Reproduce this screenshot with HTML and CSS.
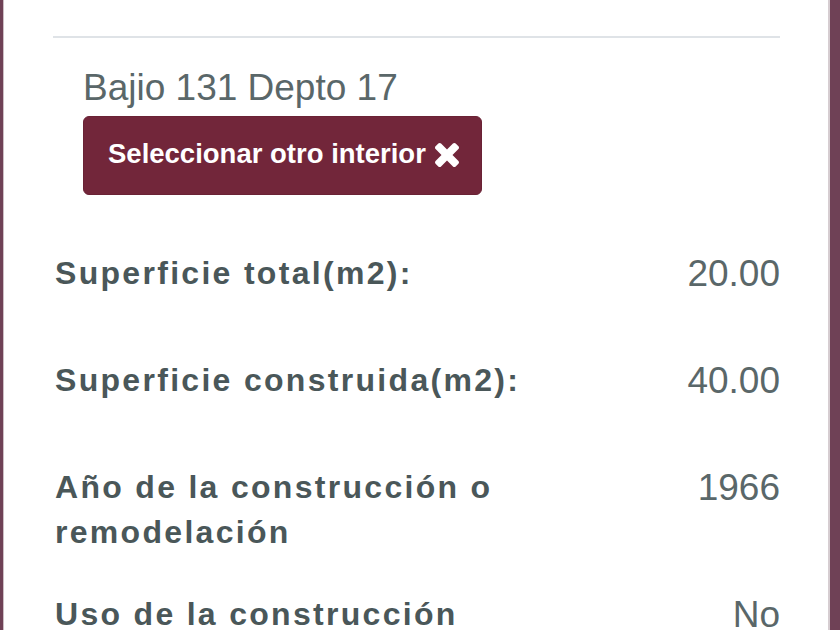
FILE: index.html
```html
<!DOCTYPE html>
<html lang="es">
<head>
<meta charset="utf-8">
<title>Interior</title>
<link rel="stylesheet" href="styles.css">
</head>
<body>
<div class="panel">
  <hr class="divider">
  <div class="address">
    <div class="address-name">Bajio 131 Depto 17</div>
    <button class="btn-change" type="button">
      <span>Seleccionar otro interior</span>
      <svg class="icon-x" viewBox="110 366 1188 1188" aria-hidden="true"><path fill="#fff" d="M1298 1322q0 40-28 68l-136 136q-28 28-68 28t-68-28l-294-294-294 294q-28 28-68 28t-68-28l-136-136q-28-28-28-68t28-68l294-294-294-294q-28-28-28-68t28-68l136-136q28-28 68-28t68 28l294 294 294-294q28-28 68-28t68 28l136 136q28 28 28 68t-28 68l-294 294 294 294q28 28 28 68z"/></svg>
    </button>
  </div>
  <div class="details">
    <div class="row">
      <div class="label">Superficie total(m2):</div>
      <div class="value">20.00</div>
    </div>
    <div class="row">
      <div class="label">Superficie construida(m2):</div>
      <div class="value">40.00</div>
    </div>
    <div class="row">
      <div class="label">Año de la construcción o remodelación</div>
      <div class="value">1966</div>
    </div>
    <div class="row">
      <div class="label">Uso de la construcción</div>
      <div class="value">No</div>
    </div>
  </div>
</div>
</body>
</html>
```

FILE: styles.css
```css
html, body {
  margin: 0;
  padding: 0;
  height: 100%;
  overflow: hidden;
}
body {
  background: #6f4156;
  font-family: "Liberation Sans", Arial, sans-serif;
}
.panel {
  box-sizing: border-box;
  margin: 0 10px 0 3px;
  min-height: 100%;
  background: #fff;
  border-left: 1px solid #cdbfc5;
  border-right: 2px solid #d6cdd1;
  padding: 36px 48px 0 49px;
}
.divider {
  margin: 0;
  border: 0;
  height: 2px;
  background: #dfe3e7;
}
.address {
  padding-left: 30px;
  margin-top: 27px;
}
.address-name {
  font-size: 37px;
  line-height: 45px;
  color: #5a6769;
}
.btn-change {
  margin-top: 6px;
  height: 79px;
  display: inline-flex;
  align-items: center;
  gap: 9px;
  padding: 0 22px 4px 24px;
  background: #72263a;
  border: 1px solid #6a2235;
  border-radius: 6px;
  color: #fff;
  font-family: "Liberation Sans", Arial, sans-serif;
  font-weight: bold;
  font-size: 27.5px;
  cursor: pointer;
}
.icon-x {
  width: 24px;
  height: 24px;
  margin-top: 2px;
}
.details {
  margin-top: 56px;
}
.row {
  display: flex;
  justify-content: space-between;
  align-items: flex-start;
  min-height: 107px;
  padding-bottom: 37px;
  box-sizing: border-box;
}
.label {
  flex: 0 0 490px;
  padding-left: 2px;
  font-weight: bold;
  font-size: 32px;
  letter-spacing: 2.3px;
  line-height: 45px;
  color: #4a5759;
}
.value {
  font-size: 37px;
  line-height: 45px;
  color: #5a6769;
  text-align: right;
}
```
